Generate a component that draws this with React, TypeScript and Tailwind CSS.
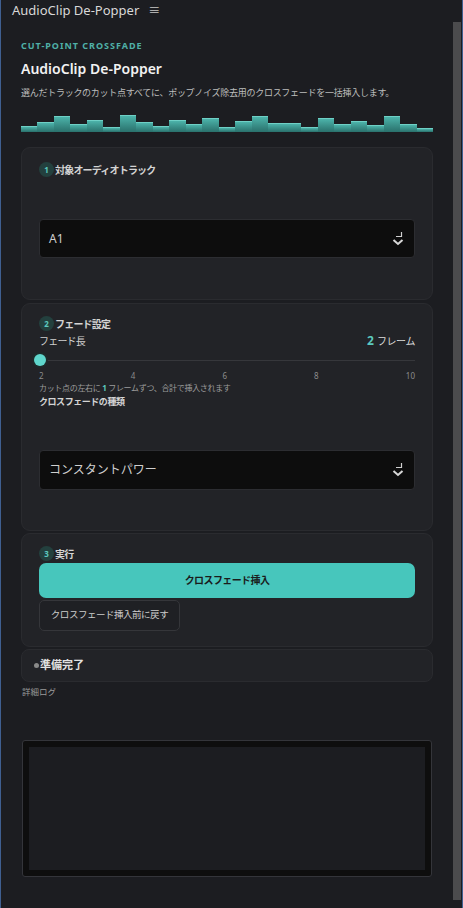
import React from "react";

const bars = [6, 10, 16, 8, 12, 5, 17, 10, 6, 12, 8, 14, 5, 11, 16, 9, 9, 5, 14, 8, 11, 7, 16, 8, 4];

function SelectIcon() {
  return (
    <svg width="12" height="16" viewBox="0 0 12 16" className="shrink-0">
      <path d="M4 5.5H9.5V1" stroke="#d0d0d0" strokeWidth="1.2" fill="none" />
      <path d="M1.5 9L6 13L10.5 9" stroke="#d8d8d8" strokeWidth="2" fill="none" />
    </svg>
  );
}

function StepHeader({ n, label }: { n: string; label: string }) {
  return (
    <div className="flex h-[15px] items-center gap-[1px]">
      <span className="flex h-[15px] w-[15px] items-center justify-center rounded-full bg-[#23403e] text-[8px] font-bold text-[#5cc9bf]">
        {n}
      </span>
      <span className="text-[10px] font-bold leading-[14px] tracking-[-0.08em] text-[#d4d4d4]">{label}</span>
    </div>
  );
}

function FakeSelect({ value, className }: { value: string; className: string }) {
  return (
    <div
      className={`flex items-center justify-between rounded-[4px] border border-[#2c2d31] bg-[#0d0d0d] pl-[9px] pr-[10px] ${className}`}
    >
      <span className="text-[12px] text-[#cfcfcf]">{value}</span>
      <SelectIcon />
    </div>
  );
}

export default function App() {
  return (
    <div
      className="flex h-[908px] w-[463px] flex-col overflow-hidden border-x border-[#3f5f90] bg-[#1c1d21]"
      style={{ fontFamily: '"Noto Sans", "Noto Sans CJK JP", sans-serif' }}
    >
      <div className="flex h-[22px] shrink-0 items-center pl-[11px]">
        <span className="text-[13px] text-[#d8d8d8]">AudioClip De-Popper</span>
        <span className="ml-[9px] text-[12px] text-[#c8c8c8]">≡</span>
      </div>

      <div className="flex min-h-0 flex-1">
        <div className="flex-1 pl-[20px] pr-[20px] pt-[18px]">
          <div className="text-[9px] font-bold leading-[12px] tracking-[0.11em] text-[#4fb0a7]">
            CUT-POINT CROSSFADE
          </div>
          <h1 className="mt-[7px] text-[14px] font-semibold leading-[20px] text-[#f2f2f2]">
            AudioClip De-Popper
          </h1>
          <p className="mt-[7px] whitespace-nowrap text-[9px] leading-[14px] tracking-[-0.03em] text-[#bdbdbd]">
            選んだトラックのカット点すべてに、ポップノイズ除去用のクロスフェードを一括挿入します。
          </p>

          <div className="mt-[14px] flex h-[18px] items-end">
            {bars.map((h, i) => (
              <div
                key={i}
                className="flex-1 border-t border-[#6fd0c6] bg-gradient-to-b from-[#4cb3aa] to-[#2a716c]"
                style={{ height: h }}
              />
            ))}
          </div>

          <section className="mt-[15px] rounded-[9px] border border-[#2a2b2f] bg-[#222327] px-[17px] pb-[41px] pt-[14px]">
            <StepHeader n="1" label="対象オーディオトラック" />
            <FakeSelect value="A1" className="mt-[42px] h-[39px]" />
          </section>

          <section className="mt-[3px] rounded-[9px] border border-[#2a2b2f] bg-[#222327] px-[17px] pb-[40px] pt-[12px]">
            <StepHeader n="2" label="フェード設定" />
            <div className="mt-[3px] flex h-[14px] items-center justify-between">
              <span className="text-[10px] tracking-[-0.08em] text-[#d0d0d0]">フェード長</span>
              <span className="flex items-baseline gap-[3px]">
                <span className="text-[12px] font-bold text-[#5cc9bf]">2</span>
                <span className="text-[10px] tracking-[-0.04em] text-[#dcdcdc]">フレーム</span>
              </span>
            </div>
            <div className="relative mt-[6px] flex h-[12px] items-center">
              <div className="h-[1px] w-full bg-[#36373b]" />
              <div className="absolute left-[-5px] top-0 h-[12px] w-[12px] rounded-full bg-[#5fd6cc] ring-2 ring-[#1e2a2a]" />
            </div>
            <div className="mt-[5px] flex h-[10px] items-center justify-between text-[8px] text-[#8c8c8c]">
              <span>2</span>
              <span>4</span>
              <span>6</span>
              <span>8</span>
              <span>10</span>
            </div>
            <p className="mt-[1px] whitespace-nowrap text-[8px] leading-[12px] tracking-[-0.04em] text-[#9c9c9c]">
              カット点の左右に <span className="font-bold text-[#5cc9bf]">1</span> フレームずつ、合計で挿入されます
            </p>
            <div className="mt-[1px] text-[9px] font-bold leading-[14px] tracking-[-0.05em] text-[#d4d4d4]">
              クロスフェードの種類
            </div>
            <FakeSelect value="コンスタントパワー" className="mt-[41px] h-[40px]" />
          </section>

          <section className="mt-[2px] rounded-[9px] border border-[#2a2b2f] bg-[#222327] px-[17px] pb-[15px] pt-[12px]">
            <StepHeader n="3" label="実行" />
            <button className="mt-[2px] flex h-[35px] w-full items-center justify-center rounded-[7px] bg-[#47c6bc] text-[10px] font-bold tracking-[-0.06em] text-[#1a1c1c]">
              クロスフェード挿入
            </button>
            <button className="mt-[2px] flex h-[31px] w-[141px] items-center justify-center rounded-[5px] border border-[#35363a] bg-[#1f2024] text-[9.5px] tracking-[-0.05em] text-[#cccccc]">
              クロスフェード挿入前に戻す
            </button>
          </section>

          <div className="mt-[2px] flex h-[33px] items-center rounded-[8px] border border-[#2a2b2f] bg-[#222327] pl-[12px]">
            <span className="mr-[1px] h-[5px] w-[5px] rounded-full bg-[#8a8a8a]" />
            <span className="text-[11px] font-bold text-[#e2e2e2]">準備完了</span>
          </div>

          <div className="mt-[4px] pl-[1px] text-[8.5px] leading-[12px] text-[#9a9a9a]">詳細ログ</div>

          <div className="mx-[1px] mt-[42px] h-[137px] rounded-[3px] border border-[#34353a] bg-[#0e0e0e] p-[6px]">
            <div className="h-full w-full bg-[#1c1d21]" />
          </div>
        </div>

        <div className="flex w-[9px] shrink-0 flex-col pb-[8px]">
          <div className="h-full w-[8px] bg-[#4b4b4d]" />
        </div>
      </div>
    </div>
  );
}
